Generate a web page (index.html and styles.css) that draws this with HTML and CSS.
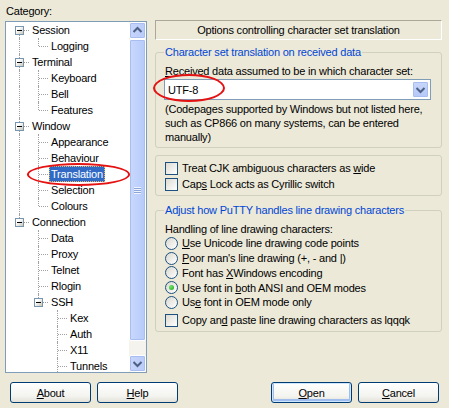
FILE: index.html
```html
<!DOCTYPE html>
<html>
<head>
<meta charset="utf-8">
<title>PuTTY Configuration</title>
<link rel="stylesheet" href="styles.css">
</head>
<body>
<div class="dialog">
  <div class="main">
    <div class="left">
      <div class="cat-label">Category:</div>
      <div class="treebox">
        <div class="tree">
          <div class="row"><span class="c bf"><span class="pm"></span></span><span class="lbl">Session</span></div>
          <div class="row"><span class="c i"></span><span class="c l"></span><span class="lbl">Logging</span></div>
          <div class="row"><span class="c bm"><span class="pm"></span></span><span class="lbl">Terminal</span></div>
          <div class="row"><span class="c i"></span><span class="c t"></span><span class="lbl">Keyboard</span></div>
          <div class="row"><span class="c i"></span><span class="c t"></span><span class="lbl">Bell</span></div>
          <div class="row"><span class="c i"></span><span class="c l"></span><span class="lbl">Features</span></div>
          <div class="row"><span class="c bm"><span class="pm"></span></span><span class="lbl">Window</span></div>
          <div class="row"><span class="c i"></span><span class="c t"></span><span class="lbl">Appearance</span></div>
          <div class="row"><span class="c i"></span><span class="c t"></span><span class="lbl">Behaviour</span></div>
          <div class="row"><span class="c i"></span><span class="c t"></span><span class="lbl sel">Translation</span></div>
          <div class="row"><span class="c i"></span><span class="c t"></span><span class="lbl">Selection</span></div>
          <div class="row"><span class="c i"></span><span class="c l"></span><span class="lbl">Colours</span></div>
          <div class="row"><span class="c bl"><span class="pm"></span></span><span class="lbl">Connection</span></div>
          <div class="row"><span class="c e"></span><span class="c t"></span><span class="lbl">Data</span></div>
          <div class="row"><span class="c e"></span><span class="c t"></span><span class="lbl">Proxy</span></div>
          <div class="row"><span class="c e"></span><span class="c t"></span><span class="lbl">Telnet</span></div>
          <div class="row"><span class="c e"></span><span class="c t"></span><span class="lbl">Rlogin</span></div>
          <div class="row"><span class="c e"></span><span class="c bl"><span class="pm"></span></span><span class="lbl">SSH</span></div>
          <div class="row"><span class="c e"></span><span class="c e"></span><span class="c t"></span><span class="lbl">Kex</span></div>
          <div class="row"><span class="c e"></span><span class="c e"></span><span class="c t"></span><span class="lbl">Auth</span></div>
          <div class="row"><span class="c e"></span><span class="c e"></span><span class="c t"></span><span class="lbl">X11</span></div>
          <div class="row"><span class="c e"></span><span class="c e"></span><span class="c t"></span><span class="lbl">Tunnels</span></div>
        </div>
        <div class="vscroll">
          <div class="sbtn">
            <svg width="15" height="15" viewBox="0 0 15 15"><path d="M3.5 9 L7.5 5 L11.5 9" fill="none" stroke="#4d6185" stroke-width="2"/></svg>
          </div>
          <div class="thumb"><span class="grip"></span></div>
          <div class="track"></div>
          <div class="sbtn">
            <svg width="15" height="15" viewBox="0 0 15 15"><path d="M3.5 6 L7.5 10 L11.5 6" fill="none" stroke="#4d6185" stroke-width="2"/></svg>
          </div>
        </div>
      </div>
    </div>
    <div class="right">
      <div class="header">Options controlling character set translation</div>
      <fieldset class="group g1">
        <legend>Character set translation on received data</legend>
        <div class="txt first"><u>R</u>eceived data assumed to be in which character set:</div>
        <div class="combo">
          <span class="combo-val">UTF-8</span>
          <span class="dd">
            <svg width="15" height="15" viewBox="0 0 15 15"><path d="M3.5 6 L7.5 10 L11.5 6" fill="none" stroke="#4d6185" stroke-width="2"/></svg>
          </span>
        </div>
        <div class="txt desc">(Codepages supported by Windows but not listed here,<br>such as CP866 on many systems, can be entered<br>manually)</div>
      </fieldset>
      <fieldset class="group g2">
        <div class="opt"><span class="chk"></span><span>Treat CJK ambiguous characters as <u>w</u>ide</span></div>
        <div class="opt"><span class="chk"></span><span>Cap<u>s</u> Lock acts as Cyrillic switch</span></div>
      </fieldset>
      <fieldset class="group g3">
        <legend>Adjust how PuTTY handles line drawing characters</legend>
        <div class="txt first">Handling of line drawing characters:</div>
        <div class="opt r"><span class="radio"></span><span><u>U</u>se Unicode line drawing code points</span></div>
        <div class="opt r"><span class="radio"></span><span><u>P</u>oor man's line drawing (+, - and |)</span></div>
        <div class="opt r"><span class="radio"></span><span>Font has <u>X</u>Windows encoding</span></div>
        <div class="opt r"><span class="radio on"></span><span>Use font in <u>b</u>oth ANSI and OEM modes</span></div>
        <div class="opt r"><span class="radio"></span><span>Us<u>e</u> font in OEM mode only</span></div>
        <div class="opt last"><span class="chk"></span><span>Copy an<u>d</u> paste line drawing characters as lqqqk</span></div>
      </fieldset>
    </div>
  </div>
  <div class="buttons">
    <button class="btn"><u>A</u>bout</button>
    <button class="btn"><u>H</u>elp</button>
    <span class="spacer"></span>
    <button class="btn def"><u>O</u>pen</button>
    <button class="btn"><u>C</u>ancel</button>
  </div>
  <div class="ring ring1"></div>
  <div class="ring ring2"></div>
</div>
</body>
</html>
```

FILE: styles.css
```css
html, body {
  margin: 0;
  padding: 0;
}
body {
  width: 449px;
  height: 408px;
  overflow: hidden;
  background: #ece9d8;
  font-family: "Liberation Sans", Arial, sans-serif;
  font-size: 11px;
  letter-spacing: -0.2px;
  color: #000;
}
.dialog {
  position: relative;
  width: 449px;
  height: 408px;
  display: flex;
  flex-direction: column;
}
.main {
  display: flex;
  gap: 8px;
  padding: 0 7px 0 5px;
}
.left {
  width: 142px;
  display: flex;
  flex-direction: column;
}
.cat-label {
  padding: 4px 0 0 1px;
  line-height: 14px;
  height: 17px;
}
.treebox {
  box-sizing: border-box;
  width: 142px;
  height: 352px;
  border: 1px solid #7f9db9;
  background: #fff;
  display: flex;
  overflow: hidden;
}
.tree {
  flex: 1;
  padding-left: 4px;
  overflow: hidden;
}
.row {
  display: flex;
  height: 16px;
  white-space: nowrap;
}
.c {
  position: relative;
  width: 19px;
  height: 16px;
  flex: none;
}
.c::before {
  content: "";
  position: absolute;
  left: 9px;
  top: 0;
  bottom: 0;
  border-left: 1px dotted #a0a0a0;
}
.c::after {
  content: "";
  position: absolute;
  left: 10px;
  right: 0;
  top: 8px;
  border-top: 1px dotted #a0a0a0;
}
.c.i::after, .c.e::after, .c.e::before {
  display: none;
}
.c.l::before, .c.bl::before {
  bottom: 8px;
}
.c.bf::before {
  top: 8px;
}
.pm {
  position: absolute;
  z-index: 1;
  left: 5px;
  top: 4px;
  width: 9px;
  height: 9px;
  box-sizing: border-box;
  border: 1px solid #7896b0;
  background: linear-gradient(135deg, #ffffff 30%, #c8c4b4);
}
.pm::after {
  content: "";
  position: absolute;
  left: 1px;
  top: 3px;
  width: 5px;
  height: 1px;
  background: #000;
}
.lbl {
  margin-left: 1px;
  padding: 0 1px;
  border: 1px solid transparent;
  line-height: 14px;
  height: 14px;
}
.lbl.sel {
  background: #316ac5;
  color: #fff;
  border: 1px dotted #e8b86a;
}
.vscroll {
  width: 17px;
  flex: none;
  display: flex;
  flex-direction: column;
  background: #f4f3ee;
}
.sbtn {
  box-sizing: border-box;
  width: 17px;
  height: 17px;
  flex: none;
  border: 1px solid #fff;
  border-radius: 2px;
  background: linear-gradient(to right, #c8d6fb, #b9cbf9);
  box-shadow: inset 0 0 0 1px #a9bef0;
  display: flex;
  align-items: center;
  justify-content: center;
}
.thumb {
  box-sizing: border-box;
  height: 302px;
  flex: none;
  border: 1px solid #fff;
  border-radius: 2px;
  background: linear-gradient(to right, #c9d8fc, #b6cbfa);
  box-shadow: inset 0 0 0 1px #a9bef0;
  display: flex;
  align-items: center;
  justify-content: center;
}
.grip {
  width: 7px;
  height: 7px;
  background: repeating-linear-gradient(to bottom, #eef3fe 0 1px, #8ca6dc 1px 2px);
}
.track {
  flex: 1;
}
.right {
  width: 287px;
  display: flex;
  flex-direction: column;
  padding-top: 20px;
}
.header {
  box-sizing: border-box;
  height: 20px;
  border: 1px solid;
  border-color: #aca899 #fff #fff #aca899;
  text-align: center;
  line-height: 18px;
}
.group {
  margin: 0;
  border: 1px solid #d0d0bf;
  border-radius: 3px;
  padding: 0 8px;
  min-width: 0;
}
.group legend {
  color: #0046d5;
  padding: 0 1px;
  line-height: 14px;
  margin-left: 0;
}
.g1 {
  margin-top: 5px;
  padding-bottom: 3px;
}
.txt {
  margin-left: 1px;
  line-height: 14px;
}
.txt.first {
  margin-top: 5px;
}
.combo {
  box-sizing: border-box;
  margin-top: 1px;
  width: 267px;
  height: 21px;
  border: 1px solid #7f9db9;
  background: #fff;
  display: flex;
  align-items: center;
  padding: 0 1px 0 3px;
}
.combo-val {
  flex: 1;
}
.dd {
  box-sizing: border-box;
  width: 17px;
  height: 17px;
  border: 1px solid #fff;
  border-radius: 2px;
  background: linear-gradient(to bottom, #c8d6fb, #b4c8f8);
  box-shadow: inset 0 0 0 1px #a9bef0;
  display: flex;
  align-items: center;
  justify-content: center;
}
.desc {
  margin-top: 2px;
}
.g2 {
  margin-top: 7px;
  padding-top: 4px;
  padding-bottom: 3px;
}
.opt {
  display: flex;
  align-items: center;
  height: 16px;
  line-height: 14px;
  white-space: nowrap;
}
.opt.r {
  height: 14.75px;
}
.chk {
  box-sizing: border-box;
  width: 13px;
  height: 13px;
  margin: 0 4px 0 1px;
  flex: none;
  border: 1px solid #1c5180;
  background: linear-gradient(135deg, #dcdad2, #ffffff);
}
.radio {
  position: relative;
  box-sizing: border-box;
  width: 13px;
  height: 13px;
  margin: 0 4px 0 1px;
  flex: none;
  border: 1px solid #1c5180;
  border-radius: 50%;
  background: linear-gradient(135deg, #d9d7ce, #ffffff);
}
.radio.on::after {
  content: "";
  position: absolute;
  left: 3px;
  top: 3px;
  width: 5px;
  height: 5px;
  border-radius: 50%;
  background: radial-gradient(circle at 35% 35%, #6ee76a, #21a121);
}
.g3 {
  margin-top: 7px;
  padding-bottom: 2px;
}
.g3 .txt.first {
  margin-top: 5px;
}
.opt.last {
  margin-top: 2px;
  height: 17px;
}
.buttons {
  display: flex;
  gap: 6px;
  padding: 0 10px;
  margin-top: 9px;
}
.spacer {
  flex: 1;
}
.btn {
  box-sizing: border-box;
  width: 81px;
  height: 21px;
  border: 1px solid #003c74;
  border-radius: 3px;
  background: linear-gradient(to bottom, #ffffff, #f3f3ef 70%, #e3e1d8);
  font: inherit;
  letter-spacing: inherit;
  color: #000;
  padding: 0;
  line-height: 18px;
}
.btn.def {
  box-shadow: inset 0 0 0 1px #cee7ff, inset 0 -1px 0 2px #a0bdf0;
}
.ring {
  position: absolute;
  border: 2px solid #e41212;
  border-radius: 50%;
  pointer-events: none;
}
.ring1 {
  left: 27px;
  top: 163px;
  width: 99px;
  height: 19px;
}
.ring2 {
  left: 153px;
  top: 74px;
  width: 68px;
  height: 24px;
}
```
